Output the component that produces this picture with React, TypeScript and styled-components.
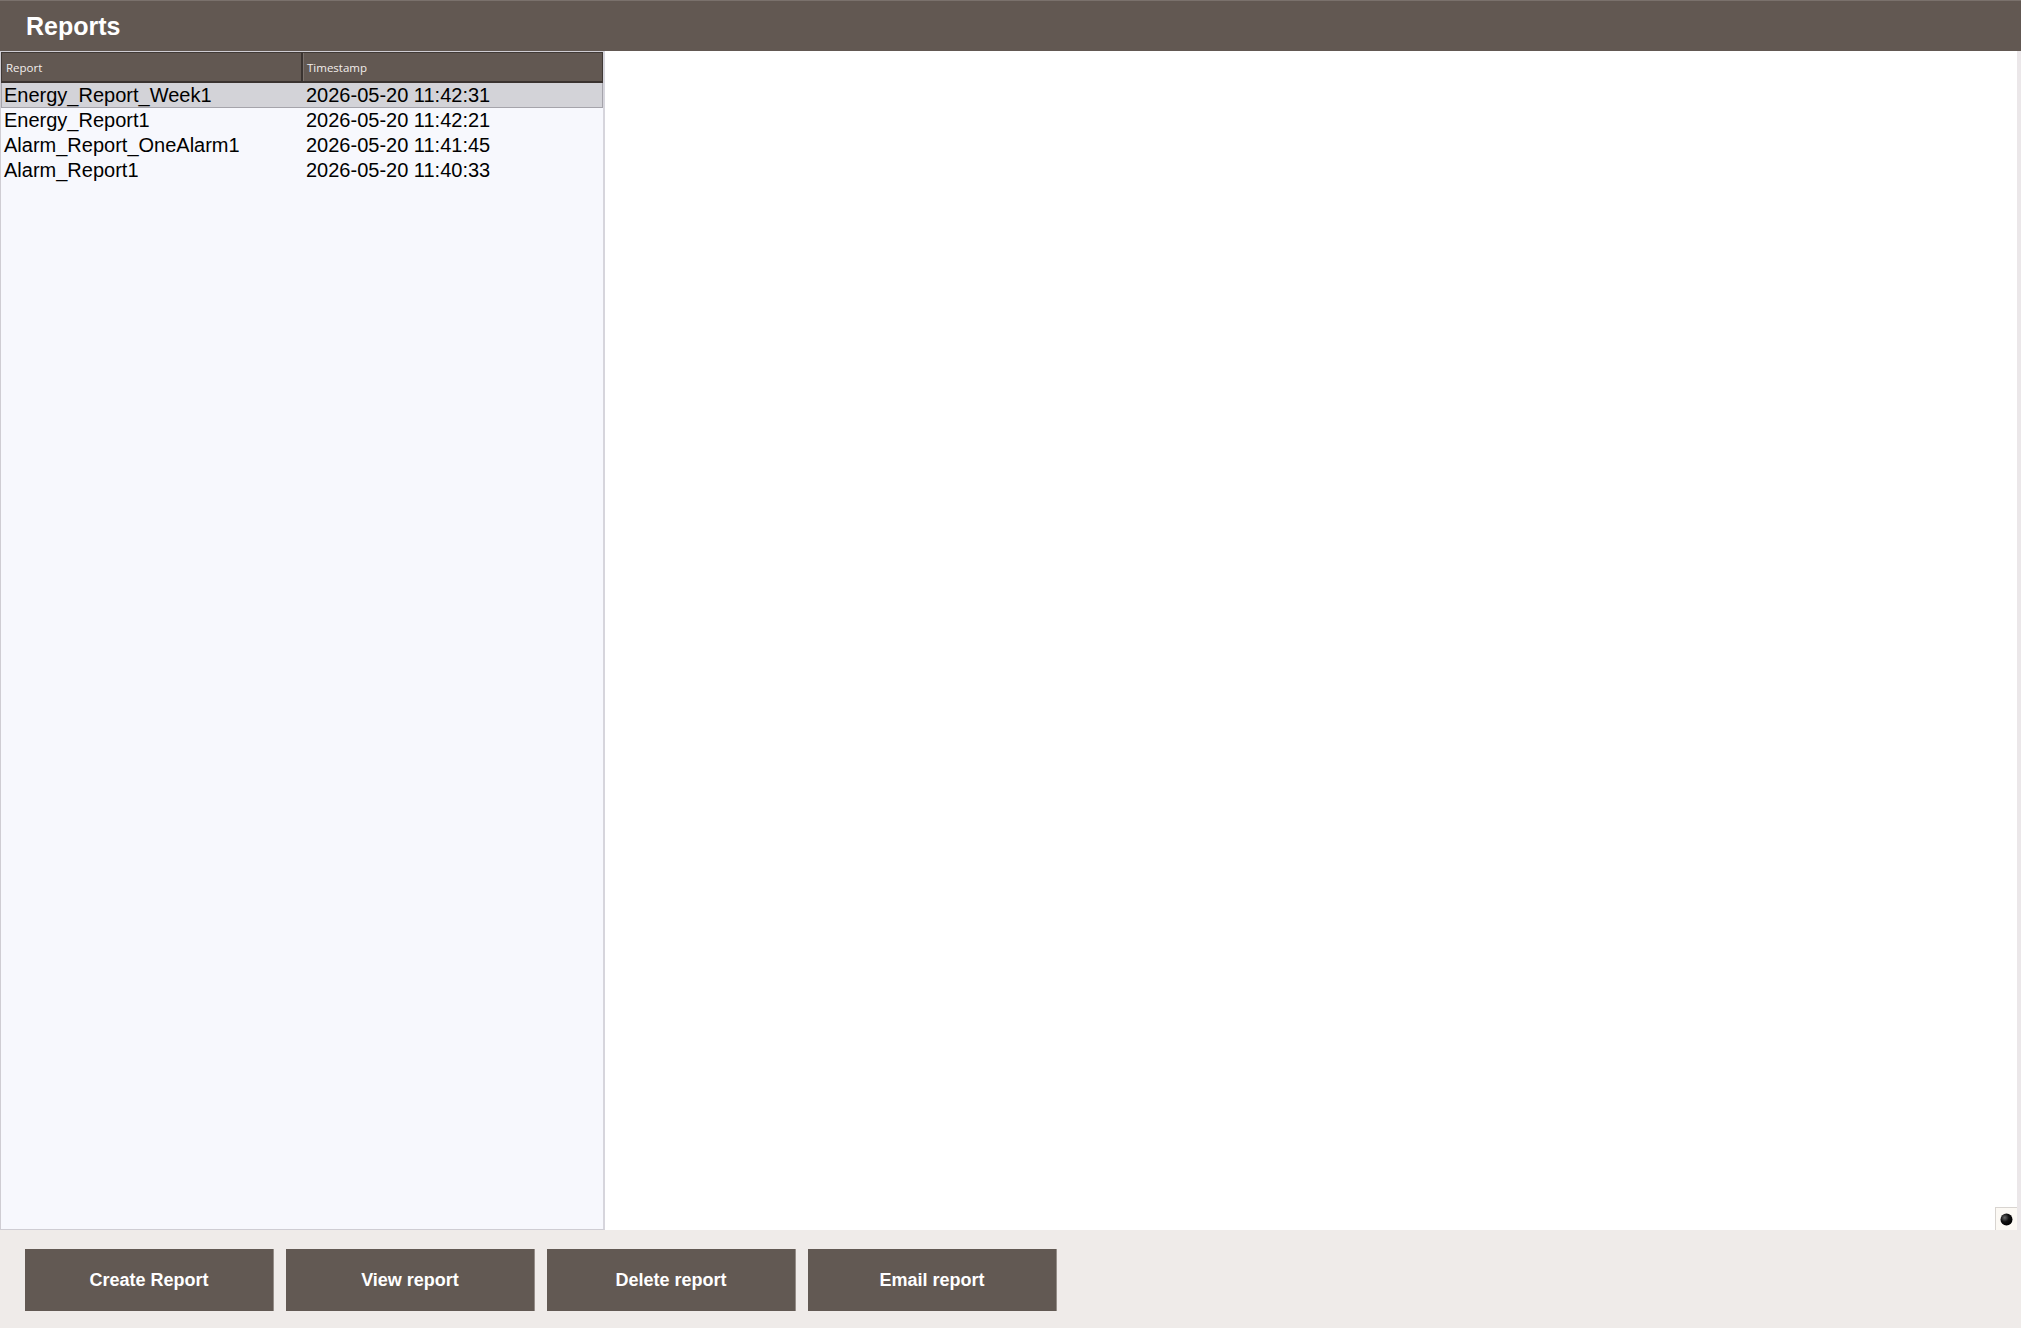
import React from "react";
import styled, { createGlobalStyle } from "styled-components";

const GlobalStyle = createGlobalStyle`
  html, body {
    margin: 0;
    padding: 0;
    width: 100%;
    height: 100%;
    overflow: hidden;
    background: #ffffff;
  }
  #root {
    height: 100%;
  }
  * {
    box-sizing: border-box;
  }
`;

const Screen = styled.div`
  display: flex;
  flex-direction: column;
  width: 2021px;
  height: 1328px;
  font-family: "Liberation Sans", Arial, sans-serif;
`;

const TitleBar = styled.header`
  flex: 0 0 51px;
  display: flex;
  align-items: center;
  padding-left: 26px;
  background: #625852;
  border-top: 1px solid #7a716c;
`;

const Title = styled.h1`
  margin: 0;
  font-size: 25px;
  font-weight: 700;
  color: #ffffff;
`;

const Body = styled.main`
  flex: 1 1 auto;
  display: flex;
  min-height: 0;
`;

const ListPanel = styled.section`
  flex: 0 0 605px;
  display: flex;
  flex-direction: column;
  background: #f7f8fd;
  border: 1px solid #cfcdd3;
  border-right: 2px solid #d6d5dc;
`;

const HeaderRow = styled.div`
  display: grid;
  grid-template-columns: 301px 1fr;
  height: 31px;
  background: #625852;
  border: 1px solid #3f3834;
  border-bottom: 2px solid #3a3330;
`;

const HeaderCell = styled.div<{ $last?: boolean }>`
  display: flex;
  align-items: center;
  padding-left: 4px;
  font-family: "Open Sans", "Noto Sans", sans-serif;
  font-size: 11.5px;
  color: #f2eeec;
  border-right: ${(p) => (p.$last ? "none" : "2px solid #3a3330")};
  box-shadow: ${(p) => (p.$last ? "none" : "1px 0 0 #7b726d")};
`;

const Row = styled.div<{ $selected?: boolean }>`
  display: grid;
  grid-template-columns: 301px 1fr;
  height: ${(p) => (p.$selected ? "25px" : "19.5px")};
  align-items: center;
  background: ${(p) => (p.$selected ? "#d3d3d8" : "transparent")};
  border: 1px solid ${(p) => (p.$selected ? "#a5a4ab" : "transparent")};
  border-top: none;
  font-size: 20px;
  color: #000000;
  & + & {
    height: 25px;
  }
`;

const Cell = styled.div<{ $indent: number }>`
  padding-left: ${(p) => p.$indent}px;
  white-space: nowrap;
  line-height: 23px;
`;

const PreviewArea = styled.section`
  position: relative;
  flex: 1 1 auto;
  background: #ffffff;
  border-right: 4px solid #ebe7e9;
`;

const Knob = styled.div`
  position: absolute;
  right: 0;
  bottom: 0;
  width: 22px;
  height: 23px;
  display: flex;
  align-items: center;
  justify-content: center;
  background: #fcf9f4;
  border-left: 1px solid #d8d4d0;
  border-top: 1px solid #d8d4d0;
`;

const Footer = styled.footer`
  flex: 0 0 98px;
  display: flex;
  gap: 12px;
  padding: 19px 0 0 25px;
  background: #efebe9;
`;

const ActionButton = styled.button`
  width: 249px;
  height: 62px;
  padding: 0;
  background: #625953;
  border: none;
  border-right: 1px solid #958d88;
  color: #ffffff;
  font-family: "Liberation Sans", Arial, sans-serif;
  font-size: 18px;
  font-weight: 700;
  cursor: pointer;
`;

const reports = [
  { name: "Energy_Report_Week1", time: "2026-05-20 11:42:31" },
  { name: "Energy_Report1", time: "2026-05-20 11:42:21" },
  { name: "Alarm_Report_OneAlarm1", time: "2026-05-20 11:41:45" },
  { name: "Alarm_Report1", time: "2026-05-20 11:40:33" },
];

const actions = ["Create Report", "View report", "Delete report", "Email report"];

export default function App() {
  return (
    <>
      <GlobalStyle />
      <Screen>
        <TitleBar>
          <Title>Reports</Title>
        </TitleBar>
        <Body>
          <ListPanel>
            <HeaderRow>
              <HeaderCell>Report</HeaderCell>
              <HeaderCell $last>Timestamp</HeaderCell>
            </HeaderRow>
            {reports.map((r, i) => (
              <Row key={r.name} $selected={i === 0}>
                <Cell $indent={2}>{r.name}</Cell>
                <Cell $indent={3}>{r.time}</Cell>
              </Row>
            ))}
          </ListPanel>
          <PreviewArea>
            <Knob>
              <svg width="13" height="13" viewBox="0 0 13 13">
                <defs>
                  <radialGradient id="knobShade" cx="0.35" cy="0.35" r="0.7">
                    <stop offset="0" stopColor="#6a6a6a" />
                    <stop offset="0.5" stopColor="#111111" />
                    <stop offset="1" stopColor="#000000" />
                  </radialGradient>
                </defs>
                <circle cx="6.5" cy="6.5" r="6" fill="url(#knobShade)" />
              </svg>
            </Knob>
          </PreviewArea>
        </Body>
        <Footer>
          {actions.map((a) => (
            <ActionButton key={a}>{a}</ActionButton>
          ))}
        </Footer>
      </Screen>
    </>
  );
}
